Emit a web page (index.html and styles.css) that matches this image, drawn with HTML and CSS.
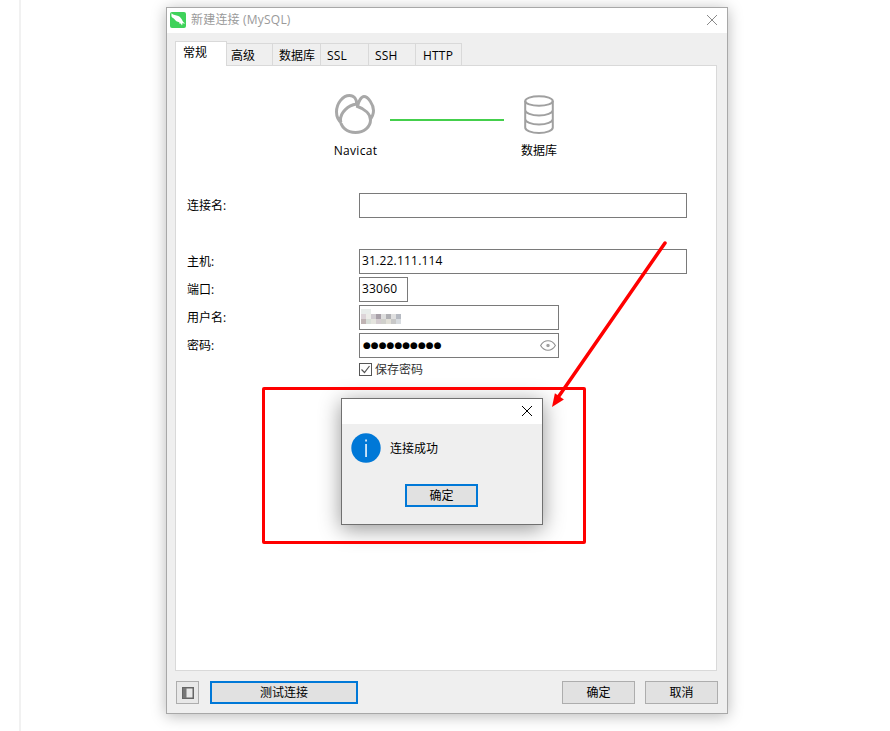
FILE: index.html
```html
<!DOCTYPE html>
<html lang="zh">
<head>
<meta charset="utf-8">
<title>新建连接 (MySQL)</title>
<link rel="stylesheet" href="styles.css">
</head>
<body>
<div class="stripe"></div>
<main class="window">
  <header class="titlebar">
    <svg class="app-icon" viewBox="0 0 16 16"><rect width="16" height="16" rx="2" fill="#3fd25a"/><path d="M1.500 1.200C3.500 3.300 6 3 8.300 4c2 .9 3.300 2.800 4.200 4.700.5 1.100 1.300 1.800 2.500 2.600-.9.300-1.800.2-2.600-.2.100.8 0 1.700-.4 2.500-.4-1-1-1.800-1.900-2.300-.3.200-.6.300-1 .3.200-.5.300-.9.200-1.400C7 9.900 5.500 8.800 4.500 7.300 3.700 6.100 2.300 6 1.600 4.800 1.300 3.700 1.300 2.400 1.500 1.200z" fill="#fff"/></svg>
    <span class="title-text latin">新建连接 (MySQL)</span>
    <svg class="close close-main" viewBox="0 0 10 10"><path d="M0 0L10 10M10 0L0 10"/></svg>
  </header>
  <div class="body">
    <nav class="tabs">
      <span class="tab active">常规</span>
      <span class="tab t45">高级</span>
      <span class="tab t48">数据库</span>
      <span class="tab t48 latin">SSL</span>
      <span class="tab t47 latin">SSH</span>
      <span class="tab t46 latin">HTTP</span>
    </nav>
    <section class="panel">
      <div class="hero">
        <figure class="node">
          <svg class="logo" viewBox="0 0 40 40"><path d="M6.500 29C3 26 1.500 22 1.500 18 1.500 9 8 1.500 14.500 1.500c4.500 0 7.500 3.500 7 8.500C13 11.500 5.500 18 5.500 26 5.500 33 12 38.500 20.500 38.500S35.500 33 35.500 26c0-6-5.500-11-13-13.500C23.500 7 26.500 2.500 29 2.500c4 0 9.500 8 9.500 14 0 4-1.500 7-4 9.500"/></svg>
          <figcaption class="navicat">Navicat</figcaption>
        </figure>
        <div class="link"></div>
        <figure class="node">
          <svg class="db" viewBox="0 0 30 39"><ellipse cx="15" cy="6" rx="13.800" ry="4.800"/><path d="M1.200 6v26.500C1.200 35.500 7.500 38 15 38s13.800-2.500 13.800-5.500V6M1.200 15c0 3 6.300 5.500 13.800 5.500S28.800 18 28.800 15M1.200 24c0 3 6.300 5.500 13.800 5.500S28.800 27 28.800 24"/></svg>
          <figcaption>数据库</figcaption>
        </figure>
      </div>
      <div class="form">
        <div class="row first"><label>连接名:</label><div class="field wide"></div></div>
        <div class="row spaced"><label>主机:</label><div class="field wide latin">31.22.111.114</div></div>
        <div class="row"><label>端口:</label><div class="field port latin">33060</div></div>
        <div class="row"><label>用户名:</label><div class="field mid">
          <svg class="mosaic" width="46" height="16" viewBox="0 0 46 16"><rect x="1" y="0" width="10" height="5" fill="#e8ecea"/><rect x="1" y="5" width="5" height="5" fill="#dcd4d8"/><rect x="6" y="5" width="5" height="5" fill="#ecece8"/><rect x="11" y="5" width="5" height="5" fill="#d0ccd0"/><rect x="16" y="5" width="5" height="5" fill="#a8a0a8"/><rect x="21" y="5" width="5" height="5" fill="#dedede"/><rect x="26" y="5" width="5" height="5" fill="#b0b0b4"/><rect x="31" y="5" width="5" height="5" fill="#e0e0e0"/><rect x="36" y="5" width="5" height="5" fill="#b6bac2"/><rect x="1" y="10" width="5" height="5" fill="#c0b4b4"/><rect x="6" y="10" width="5" height="5" fill="#d8ded8"/><rect x="11" y="10" width="5" height="5" fill="#e4e4de"/><rect x="16" y="10" width="5" height="5" fill="#d4ccd0"/><rect x="21" y="10" width="5" height="5" fill="#d0d0cc"/><rect x="26" y="10" width="5" height="5" fill="#e2e0d8"/><rect x="31" y="10" width="5" height="5" fill="#c8c8c8"/><rect x="36" y="10" width="5" height="5" fill="#d8dce0"/></svg>
        </div></div>
        <div class="row"><label>密码:</label><div class="field mid pass"><span class="dots">●●●●●●●●●●</span>
          <svg class="eye" viewBox="0 0 16 11"><path d="M.6 5.500C2.500 2.300 5 .8 8 .8s5.500 1.500 7.400 4.700C13.500 8.700 11 10.200 8 10.200S2.500 8.700.6 5.500z"/><circle cx="8" cy="5.500" r="2.300"/></svg>
        </div></div>
        <div class="row check-row"><span></span><div class="check">
          <svg class="box" viewBox="0 0 13 13"><rect x=".5" y=".5" width="12" height="12"/><path d="M2.500 6.500l3 3 5-6.500"/></svg>
          <span>保存密码</span></div></div>
      </div>
    </section>
    <footer class="footer">
      <button class="btn side"><svg viewBox="0 0 12 12"><rect x=".75" y=".75" width="10.500" height="10.500"/><rect x="1" y="1" width="3.500" height="10" class="fill"/></svg></button>
      <button class="btn test focus">测试连接</button>
      <span class="grow"></span>
      <button class="btn act">确定</button>
      <button class="btn act">取消</button>
    </footer>
  </div>
  <div class="dialog">
    <div class="dlg-title"><svg class="close close-dlg" viewBox="0 0 10 10"><path d="M0 0L10 10M10 0L0 10"/></svg></div>
    <div class="dlg-body">
      <div class="msg">
        <svg class="info" viewBox="0 0 30 30"><circle cx="15" cy="15" r="14.700" fill="#0078d7"/><rect x="14.300" y="11" width="1.500" height="13" fill="#fff"/><rect x="14.300" y="6.500" width="1.500" height="2" fill="#fff"/></svg>
        <span class="msg-text">连接成功</span>
      </div>
      <button class="btn focus dlg-ok">确定</button>
    </div>
  </div>
  <div class="callout"></div>
  <svg class="arrow" width="130" height="180" viewBox="0 0 130 180"><path class="shaft" d="M113 2L7 155"/><path class="head" d="M0 166L2.900 152.200 11.900 158.400z"/></svg>
</main>
</body>
</html>
```
FILE: styles.css
```css
* { box-sizing: border-box; }
html, body { margin: 0; height: 100%; background: #fff; }
body {
  font: 12px/16px "Open Sans", "Noto Sans CJK SC", sans-serif;
  color: #000;
  display: flex;
  padding: 7px 0 0 19px;
  overflow: hidden;
}
.stripe { width: 2px; margin-top: -7px; height: 731px; background: #f1f1f1; flex: none; }
.window {
  position: relative;
  flex: none;
  margin-left: 145px;
  width: 562px;
  height: 707px;
  background: #efefef;
  border: 1px solid #a8a8a8;
  box-shadow: 0 2px 14px rgba(0,0,0,.28);
  display: flex;
  flex-direction: column;
}
.latin { letter-spacing: .2px; }
.titlebar {
  height: 25px;
  background: #fff;
  display: flex;
  align-items: center;
  padding: 0 10px 1px 3px;
  flex: none;
}
.app-icon { width: 16px; height: 16px; margin: 0 5px 0 0; }
.title-text { color: #9a9a9a; }
.close { fill: none; stroke: #8a8a8a; stroke-width: 1; margin-left: auto; width: 10px; height: 10px; }
.body { flex: 1; display: flex; flex-direction: column; padding: 8px 9px 9px 8px; min-height: 0; }
.tabs { display: flex; align-items: flex-end; height: 25px; position: relative; z-index: 1; margin-bottom: -1px; flex: none; }
.tab {
  height: 23px;
  background: #efefef;
  border: 1px solid #d9d9d9;
  border-left: 0;
  border-bottom: 1px solid #d9d9d9;
  padding: 4px 0 0 6px;
  white-space: nowrap;
}
.tab.active {
  width: 52px;
  height: 25px;
  background: #fff;
  border: 1px solid #d9d9d9;
  border-bottom: 0;
  padding: 3px 0 0 7px;
}
.tab.t45 { width: 46px; padding-left: 4px; }
.t48 { width: 48px; }
.t47 { width: 47px; }
.tab.t46 { width: 46px; padding-left: 7px; }
.panel {
  flex: 1;
  background: #fff;
  border: 1px solid #d9d9d9;
  width: 542px;
  display: flex;
  flex-direction: column;
  min-height: 0;
}
.hero { display: flex; align-items: flex-start; padding: 28px 0 0 149px; flex: none; }
.node { margin: 0; width: 60px; display: flex; flex-direction: column; align-items: center; }
.node figcaption { margin-top: 9px; line-height: 16px; }
.node figcaption.navicat { letter-spacing: .3px; padding-left: 1px; }
.logo { width: 40px; height: 40px; fill: none; stroke: #a8a8a8; stroke-width: 3; }
.db { width: 30px; height: 39px; fill: none; stroke: #a0a0a0; stroke-width: 2; margin-top: 1px; }
.link { width: 114px; height: 2px; background: #44cf4c; margin: 25px 5px 0; }
.form { padding: 34px 0 0 11px; flex: none; }
.row { display: grid; grid-template-columns: 172px 1fr; align-items: center; margin-top: 3px; }
.row.first { margin-top: 0; }
.row.spaced { margin-top: 31px; }
.row label { line-height: 16px; }
.field {
  height: 25px;
  border: 1px solid #7a7a7a;
  background: #fff;
  padding: 0 2px 2px;
  line-height: 21px;
  position: relative;
  display: flex;
  align-items: center;
}
.wide { width: 328px; }
.port { width: 49px; }
.mid { width: 200px; padding-bottom: 1px; }
.mosaic { display: block; margin-left: -2px; }
.dots { font: 9px/16px "DejaVu Sans", sans-serif; margin-left: 1px; }
.pass { justify-content: space-between; padding-right: 2px; }
.eye { width: 16px; height: 11px; fill: none; stroke: #8f8f8f; stroke-width: 1.100; flex: none; }
.eye circle { fill: #a0a0a0; stroke: #fff; }
.check-row { margin-top: 5px; }
.check { display: flex; align-items: center; gap: 3px; color: #333; line-height: 13px; }
.box { width: 13px; height: 13px; flex: none; }
.box rect { fill: #fff; stroke: #555; }
.box path { fill: none; stroke: #555; stroke-width: 1.200; }
.footer { display: flex; align-items: center; height: 23px; margin-top: 10px; flex: none; padding-left: 1px; }
.btn {
  font: inherit;
  color: #000;
  background: #e1e1e1;
  border: 1px solid #adadad;
  height: 23px;
  padding: 0;
  flex: none;
  border-radius: 0;
}
.btn.focus { border: 2px solid #0078d7; }
.side { width: 23px; background: #e8e8e8; display: flex; align-items: center; justify-content: center; }
.side svg { width: 12px; height: 12px; fill: none; stroke: #666; stroke-width: 1.500; }
.side .fill { fill: #777; stroke: none; }
.test { width: 148px; margin-left: 11px; }
.grow { flex: 1; }
.act { width: 73px; margin-left: 10px; }
.dialog {
  position: absolute;
  left: 174px;
  top: 390px;
  width: 202px;
  height: 127px;
  background: #efefef;
  border: 1px solid #707070;
  box-shadow: 0 4px 20px rgba(0,0,0,.42);
  display: flex;
  flex-direction: column;
  z-index: 2;
}
.dlg-title { height: 25px; background: #fff; display: flex; align-items: center; padding: 0 10px 1px; flex: none; }
.close-dlg { stroke: #000; }
.dlg-body { flex: 1; display: flex; flex-direction: column; padding: 9px 0 0 63px; }
.msg { display: flex; align-items: center; gap: 9px; margin-left: -54px; height: 30px; }
.msg-text { padding-top: 2px; }
.info { width: 30px; height: 30px; flex: none; }
.dlg-ok { width: 73px; margin-top: 21px; }
.callout {
  position: absolute;
  left: 95px;
  top: 379px;
  width: 324px;
  height: 157px;
  border: 3px solid #ff0000;
  border-radius: 2px;
  z-index: 3;
}
.arrow { position: absolute; left: 385px; top: 233px; z-index: 3; overflow: visible; }
.shaft { fill: none; stroke: #ff0000; stroke-width: 3.500; stroke-linecap: round; }
.head { fill: #ff0000; }
```
